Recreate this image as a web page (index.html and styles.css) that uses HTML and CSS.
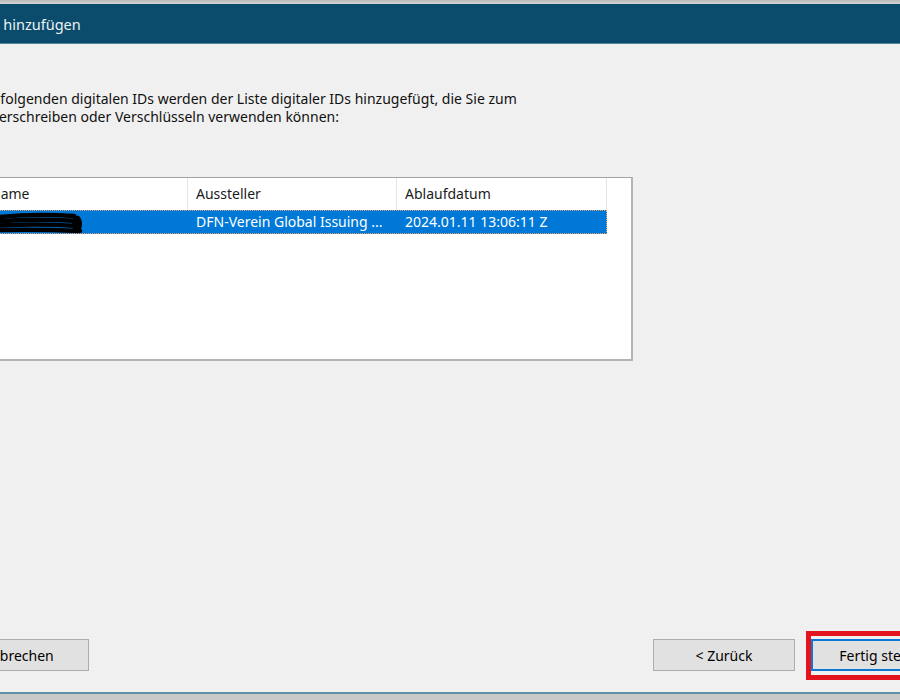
FILE: index.html
```html
<!DOCTYPE html>
<html lang="de">
<head>
    <meta charset="UTF-8">
    <title>Digitale ID hinzufügen</title>
    <link rel="stylesheet" href="styles.css">
</head>
<body>
    <div class="window-edge top"></div>
    <div class="dialog">
        <header class="titlebar">
            <span class="title">Digitale ID hinzufügen</span>
        </header>
        <main class="content">
            <p class="intro">Die folgenden digitalen IDs werden der Liste digitaler IDs hinzugefügt, die Sie zum<br>Unterschreiben oder Verschlüsseln verwenden können:</p>
            <div class="listview">
                <div class="lv-row lv-head">
                    <div class="lv-cell col-name">Name</div>
                    <div class="lv-cell col-issuer">Aussteller</div>
                    <div class="lv-cell col-expiry">Ablaufdatum</div>
                </div>
                <div class="lv-row lv-item selected">
                    <div class="lv-cell col-name">
                        <!-- name blacked out -->
                        <svg class="redacted" width="100" height="24" viewBox="0 0 100 24">
                            <g fill="none" stroke="#000" stroke-width="4.5" stroke-linecap="round">
                                <path d="M4 8 Q42 3 86 6"/>
                                <path d="M2 12 Q46 8 90 11"/>
                                <path d="M3 16 Q48 13 90 16"/>
                                <path d="M10 20 Q52 19 92 21"/>
                            </g>
                            <ellipse cx="89" cy="14" rx="5" ry="8.5" fill="#000"/>
                        </svg>
                    </div>
                    <div class="lv-cell col-issuer">DFN-Verein Global Issuing ...</div>
                    <div class="lv-cell col-expiry">2024.01.11 13:06:11 Z</div>
                </div>
            </div>
            <footer class="buttons">
                <button class="btn">Abbrechen</button>
                <div class="btn-group">
                    <button class="btn">&lt; Zurück</button>
                    <button class="btn default marked">Fertig stellen</button>
                </div>
            </footer>
        </main>
    </div>
    <div class="window-edge bottom"></div>
</body>
</html>
```

FILE: styles.css
```css
body {
    margin: 0;
    width: 900px;
    height: 700px;
    overflow: hidden;
    font-family: "Noto Sans", "Open Sans", sans-serif;
    font-size: 14px;
    color: #000;
    background-color: #f0f0f0;
}
.window-edge.top {
    height: 4px;
    background: linear-gradient(#b9b9b9, #d4d4d4);
}
.window-edge.bottom {
    height: 6px;
    border-top: 2px solid #5f8ea6;
    background: #c9c9c9;
}
.dialog {
    width: 1060px;
    margin-left: -80px;
}
.titlebar {
    height: 39px;
    display: flex;
    align-items: center;
    padding-left: 8px;
    background-color: #0b4b6b;
    border-bottom: 1px solid #5584a0;
}
.title {
    font-size: 14.5px;
    color: #eef3f6;
}
.content {
    height: 648px;
    box-sizing: border-box;
    display: flex;
    flex-direction: column;
    padding: 46px 27px 21px 61px;
}
.intro {
    margin: 0 0 0 -6px;
    line-height: 18px;
    color: #111;
}
.listview {
    margin-top: 51px;
    width: 652px;
    height: 184px;
    box-sizing: border-box;
    background: #fff;
    border: 1px solid #a3a3a3;
    border-right-width: 2px;
    border-bottom-width: 2px;
    border-right-color: #b4b4b4;
    border-bottom-color: #b4b4b4;
}
.lv-row {
    display: flex;
}
.lv-cell {
    box-sizing: border-box;
    padding-left: 8px;
    white-space: nowrap;
    overflow: hidden;
}
.col-name { width: 206px; }
.col-issuer { width: 209px; }
.col-expiry { width: 210px; }
.lv-head .lv-cell {
    height: 32px;
    line-height: 32px;
    color: #1b1b1b;
    border-right: 1px solid #e5e5e5;
}
.lv-item .lv-cell {
    height: 24px;
    line-height: 24px;
}
.lv-item.selected {
    width: 625px;
    background-color: #0078d7;
    color: #fff;
    outline: 1px dotted #e0a070;
    outline-offset: -1px;
}
.redacted {
    display: block;
    margin-left: -2px;
}
.buttons {
    margin-top: auto;
    margin-left: -34px;
    display: flex;
    justify-content: space-between;
}
.btn-group {
    display: flex;
    gap: 16px;
}
.btn {
    width: 142px;
    height: 32px;
    padding: 0;
    font-family: inherit;
    font-size: 14px;
    color: #000;
    background-color: #e1e1e1;
    border: 1px solid #adadad;
}
.btn.default {
    border: 2px solid #0a78d4;
}
/* red frame drawn around the finishing button */
.marked {
    position: relative;
}
.marked::after {
    content: "";
    position: absolute;
    top: -10px;
    left: -7px;
    right: -7px;
    bottom: -11px;
    border: 5px solid #e4141f;
}
```
